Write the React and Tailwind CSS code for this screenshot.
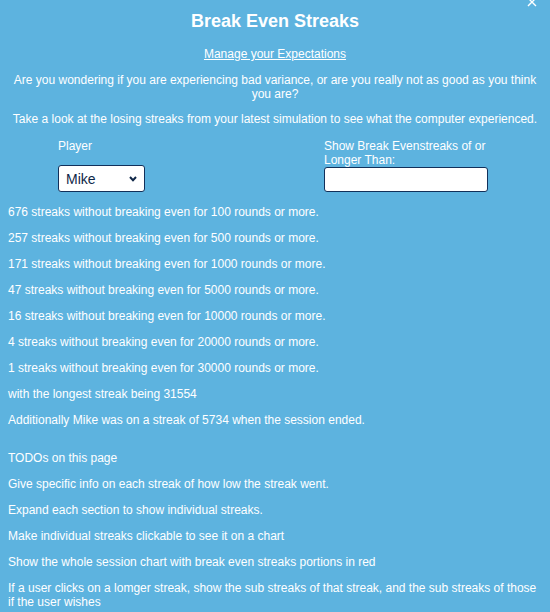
import { useState } from 'react';

const streaks = [
  { count: 676, rounds: 100 },
  { count: 257, rounds: 500 },
  { count: 171, rounds: 1000 },
  { count: 47, rounds: 5000 },
  { count: 16, rounds: 10000 },
  { count: 4, rounds: 20000 },
  { count: 1, rounds: 30000 },
];

const todos = [
  'Give specific info on each streak of how low the streak went.',
  'Expand each section to show individual streaks.',
  'Make individual streaks clickable to see it on a chart',
  'Show the whole session chart with break even streaks portions in red',
  'If a user clicks on a lomger streak, show the sub streaks of that streak, and the sub streaks of those if the user wishes',
];

const BreakEvenStreaks = () => {
  const [player, setPlayer] = useState('Mike');
  const [minLength, setMinLength] = useState('');

  return (
    <div className="relative min-h-[612px] bg-[#5db3df] text-white font-['Liberation_Sans',Arial,sans-serif] text-[12px] leading-[14px] px-2 pt-[11px] overflow-hidden">
      {/* close button */}
      <button className="absolute right-[13px] top-[-3px] w-[10px] h-[10px]">
        <svg viewBox="0 0 10 10" className="w-[10px] h-[10px]" stroke="white" strokeWidth="1.4">
          <path d="M1 1 L9 9 M9 1 L1 9" />
        </svg>
      </button>

      <h1 className="text-center text-[18px] leading-[21px] font-bold">Break Even Streaks</h1>

      <p className="text-center mt-[15px] underline">Manage your Expectations</p>

      <p className="text-center mt-3 px-1">
        Are you wondering if you are experiencing bad variance, or are you really not as good as you think you are?
      </p>

      <p className="text-center mt-[11px]">
        Take a look at the losing streaks from your latest simulation to see what the computer experienced.
      </p>

      {/* Filters */}
      <div className="flex mt-[13px] pl-[50px]">
        <div className="w-[266px]">
          <label className="block">Player</label>
          <div className="relative mt-3 w-[87px]">
            <select
              value={player}
              onChange={e => setPlayer(e.target.value)}
              className="appearance-none w-[87px] h-[27px] bg-white border border-[#12305a] rounded-[3px] pl-[7px] text-[14px] text-[#0f2748] font-['Liberation_Sans',Arial,sans-serif] outline-none"
            >
              <option>Mike</option>
            </select>
            <svg viewBox="0 0 8 6" className="absolute right-[8px] top-[11px] w-[8px] h-[6px] pointer-events-none" fill="none" stroke="#0f2748" strokeWidth="2">
              <path d="M1 1 L4 4.2 L7 1" />
            </svg>
          </div>
        </div>
        <div className="w-[164px]">
          <label className="block">Show Break Evenstreaks of or Longer Than:</label>
          <input
            value={minLength}
            onChange={e => setMinLength(e.target.value)}
            className="block w-[164px] h-[25px] bg-white border border-[#12305a] rounded-[3px] outline-none text-[#0f2748]"
          />
        </div>
      </div>

      {/* Streak results */}
      <div className="mt-[13px]">
        {streaks.map(s => (
          <p key={s.rounds} className="mb-3">
            {s.count} streaks without breaking even for {s.rounds} rounds or more.
          </p>
        ))}
        <p className="mb-3">with the longest streak being 31554</p>
        <p>Additionally {player} was on a streak of 5734 when the session ended.</p>
      </div>

      {/* TODOs */}
      <div className="mt-6">
        <p className="mb-3">TODOs on this page</p>
        {todos.map(t => (
          <p key={t} className="mb-3">{t}</p>
        ))}
      </div>
    </div>
  );
};

export default BreakEvenStreaks;
